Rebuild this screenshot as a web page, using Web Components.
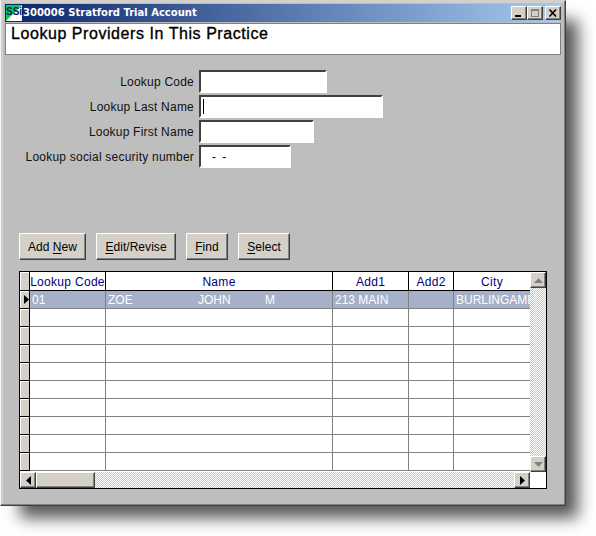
<!DOCTYPE html>
<html>
<head>
<meta charset="utf-8">
<title>Lookup Providers</title>
<style>
  html, body { margin: 0; background: #fff; }
  body { width: 596px; height: 536px; overflow: hidden; font: 12px "Liberation Sans", Arial, sans-serif; }
</style>
</head>
<body>
<app-window>
  <title-bar slot="title">300006 Stratford Trial Account</title-bar>
  <page-heading slot="heading">Lookup Providers In This Practice</page-heading>
  <lookup-field label="Lookup Code" width="128"></lookup-field>
  <lookup-field label="Lookup Last Name" width="184" caret></lookup-field>
  <lookup-field label="Lookup First Name" width="115"></lookup-field>
  <lookup-field label="Lookup social security number" width="92" value="- -"></lookup-field>
  <push-button slot="buttons" width="67" key="N" text="Add New"></push-button>
  <push-button slot="buttons" width="80" key="E" text="Edit/Revise"></push-button>
  <push-button slot="buttons" width="42" key="F" text="Find"></push-button>
  <push-button slot="buttons" width="52" key="S" text="Select"></push-button>
  <data-grid slot="grid"></data-grid>
</app-window>

<script>
class AppWindow extends HTMLElement {
  constructor() {
    super();
    this.attachShadow({ mode: "open" }).innerHTML = `
    <style>
    :host {
      display: block;
      box-sizing: border-box;
      width: 566px;
      height: 506px;
      padding: 3px 4px 0 4px;
      background: #bebebe;
      border-top: 1px solid #d4d0c8;
      border-left: 1px solid #f4f4f0;
      border-right: 1px solid #404040;
      border-bottom: 1px solid #404040;
      box-shadow: inset -1px -1px 0 #808080, inset 2px 2px 0 #d0d0d0, 16px 16px 15px -4px rgba(0,0,0,.66);
      color: #000;
    }
    .form {
      display: flex;
      flex-direction: column;
      gap: 2px;
      padding: 15px 0 0 0;
      height: 100px;
    }
    .buttons {
      display: flex;
      gap: 10px;
      margin: 63px 0 0 14px;
    }
    .grid { margin: 11px 0 0 14px; }
    </style>
    <slot name="title"></slot>
    <slot name="heading"></slot>
    <div class="form"><slot></slot></div>
    <div class="buttons"><slot name="buttons"></slot></div>
    <div class="grid"><slot name="grid"></slot></div>
    `;
  }
}

class TitleBar extends HTMLElement {
  constructor() {
    super();
    this.attachShadow({ mode: "open" }).innerHTML = `
    <style>
    :host {
      display: flex;
      align-items: center;
      height: 18px;
      background: linear-gradient(90deg, #0a246a 0%, #a6caf0 100%);
      color: #fff;
      font: bold 10px "DejaVu Sans", sans-serif;
    }
    svg.logo { width: 16px; height: 16px; margin: 0 1px 0 1px; flex: none; }
    .text { flex: 1; white-space: nowrap; margin-top: -2px; }
    .btns { display: flex; }
    .btn {
      box-sizing: border-box;
      width: 16px;
      height: 14px;
      background: #d4d0c8;
      border: 1px solid;
      border-color: #fff #404040 #404040 #fff;
      box-shadow: inset -1px -1px 0 #808080;
      display: block;
    }
    .btn svg { width: 14px; height: 12px; display: block; }
    .max { margin: 0 2px 0 0; }
    </style>
    <svg class="logo" viewBox="0 0 16 16">
      <rect width="16" height="16" fill="#fff"/>
      <path d="M0 0H16L0 16Z" fill="#10c850"/>
      <text x="0" y="10" font-family="Liberation Sans" font-size="10" fill="#0a246a">SSi</text>
    </svg>
    <span class="text"><slot></slot></span>
    <span class="btns">
      <span class="btn"><svg viewBox="0 0 14 12"><rect x="3" y="8" width="6" height="2" fill="#000"/></svg></span>
      <span class="btn max"><svg viewBox="0 0 14 12"><rect x="3.5" y="2.5" width="7" height="7" fill="none" stroke="#808080"/><rect x="3" y="2" width="8" height="2" fill="#808080"/></svg></span>
      <span class="btn"><svg viewBox="0 0 14 12"><path d="M3.5 2.5L10 9.5M10 2.5L3.5 9.5" stroke="#000" stroke-width="1.7"/></svg></span>
    </span>
    `;
  }
}

class PageHeading extends HTMLElement {
  constructor() {
    super();
    this.attachShadow({ mode: "open" }).innerHTML = `
    <style>
    :host {
      display: block;
      box-sizing: border-box;
      height: 32px;
      margin-top: 1px;
      padding: 0 0 0 5px;
      background: #fff;
      border: 1px solid #808080;
      font: 16px/20px "Liberation Sans", sans-serif;
      letter-spacing: .56px;
      -webkit-text-stroke: .35px #000;
    }
    </style>
    <slot></slot>
    `;
  }
}

class LookupField extends HTMLElement {
  constructor() {
    super();
    const root = this.attachShadow({ mode: "open" });
    root.innerHTML = `
    <style>
    :host { display: flex; align-items: center; height: 23px; }
    .label {
      width: 189px;
      margin-right: 5px;
      text-align: right;
      white-space: nowrap;
      font: 12px "Liberation Sans", sans-serif;
      letter-spacing: .22px;
      color: #111;
    }
    .box {
      box-sizing: border-box;
      height: 23px;
      display: flex;
      align-items: center;
      background: #fff;
      border: 2px solid;
      border-color: #404040 #fff #fff #404040;
      font: 12px "Liberation Sans", sans-serif;
    }
    .caret { width: 1px; height: 15px; background: #000; margin-left: 2px; }
    .value { margin-left: 11px; letter-spacing: 1.5px; }
    </style>
    <span class="label"></span>
    <span class="box"></span>
    `;
    root.querySelector(".label").textContent = this.getAttribute("label");
    const box = root.querySelector(".box");
    box.style.width = this.getAttribute("width") + "px";
    if (this.hasAttribute("caret")) {
      box.innerHTML = `<span class="caret"></span>`;
    }
    if (this.hasAttribute("value")) {
      box.innerHTML = `<span class="value">${this.getAttribute("value")}</span>`;
    }
  }
}

class PushButton extends HTMLElement {
  constructor() {
    super();
    const root = this.attachShadow({ mode: "open" });
    root.innerHTML = `
    <style>
    :host {
      display: flex;
      align-items: center;
      justify-content: center;
      box-sizing: border-box;
      height: 27px;
      background: #d4d0c8;
      border: 1px solid;
      border-color: #fff #404040 #404040 #fff;
      box-shadow: inset -1px -1px 0 #808080;
      font: 12px "Liberation Sans", sans-serif;
      letter-spacing: .05px;
      white-space: nowrap;
    }
    u { text-decoration: underline; text-underline-offset: 2px; }
    </style>
    <span class="t"></span>
    `;
    this.style.width = this.getAttribute("width") + "px";
    const text = this.getAttribute("text");
    const i = text.indexOf(this.getAttribute("key"));
    root.querySelector(".t").innerHTML =
      text.slice(0, i) + "<u>" + text[i] + "</u>" + text.slice(i + 1);
  }
}

const COLUMNS = [
  ["Lookup Code", 76],
  ["Name", 227],
  ["Add1", 76],
  ["Add2", 45],
  ["City", 76],
];
const FIRST = ["01", "", "213 MAIN", "", "BURLINGAME"];

class DataGrid extends HTMLElement {
  constructor() {
    super();
    const track = COLUMNS.map(c => c[1] + "px").join(" ");
    const head = COLUMNS.map(c => `<div class="h">${c[0]}</div>`).join("");
    let rows = "";
    for (let r = 0; r < 10; r++) {
      const cells = COLUMNS.map((c, i) => {
        if (r !== 0) return `<div class="c"></div>`;
        if (i === 1) return `<div class="c name"><span>ZOE</span><span>JOHN</span><span>M</span></div>`;
        return `<div class="c">${FIRST[i]}</div>`;
      }).join("");
      rows += `<div class="ind">${r === 0 ? '<svg width="5" height="9" viewBox="0 0 5 9"><path d="M0 0L5 4.5L0 9Z"/></svg>' : ""}</div>
        <div class="row${r === 0 ? " sel" : ""}">${cells}</div>`;
    }
    this.attachShadow({ mode: "open" }).innerHTML = `
    <style>
    :host {
      display: grid;
      box-sizing: border-box;
      width: 528px;
      height: 218px;
      grid-template-columns: 1fr 16px;
      grid-template-rows: 1fr 16px;
      background: #fff;
      border: 1px solid #000;
      font: 12px "Liberation Sans", sans-serif;
    }
    .table {
      display: grid;
      grid-template-columns: 10px 500px;
      grid-template-rows: 19px;
      grid-auto-rows: 18px;
      overflow: hidden;
      align-content: start;
    }
    .corner, .ind {
      box-sizing: border-box;
      background: #d4d0c8;
      border-right: 1px solid #000;
      border-bottom: 1px solid #000;
      display: flex;
      align-items: center;
      justify-content: flex-end;
      box-shadow: inset 1px 1px 0 #fff;
    }
    .row { display: grid; grid-template-columns: ${track}; }
    .h, .c {
      box-sizing: border-box;
      overflow: hidden;
      white-space: nowrap;
    }
    .h {
      padding-top: 2px;
      line-height: 16px;
      text-align: center;
      color: #000080;
      letter-spacing: .3px;
      border-right: 1px solid #000;
      border-bottom: 1px solid #000;
    }
    .h:last-child { border-right: 0; }
    .c {
      padding: 1px 0 0 2px;
      line-height: 16px;
      border-right: 1px solid #808080;
      border-bottom: 1px solid #808080;
    }
    .c:last-child { border-right: 0; }
    .sel .c { background: #a6b0c8; color: #fff; }
    .name { display: flex; }
    .name span:nth-child(1) { width: 90px; }
    .name span:nth-child(2) { width: 67px; }
    .hatch {
      background-color: #fff;
      background-image: conic-gradient(#c8c8c8 25%, #fff 0 50%, #c8c8c8 0 75%, #fff 0);
      background-size: 2px 2px;
    }
    .vbar { display: flex; flex-direction: column; justify-content: space-between; }
    .hbar { display: flex; justify-content: space-between; grid-row: 2; }
    .sb {
      box-sizing: border-box;
      width: 16px;
      height: 16px;
      flex: none;
      display: flex;
      align-items: center;
      justify-content: center;
      background: #d4d0c8;
      border: 1px solid;
      border-color: #fff #404040 #404040 #fff;
      box-shadow: inset -1px -1px 0 #808080;
    }
    .thumb { width: 59px; height: 16px; }
    .left { display: flex; }
    </style>
    <div class="table">
      <div class="corner"></div>
      <div class="row">${head}</div>
      ${rows}
    </div>
    <div class="vbar hatch">
      <span class="sb"><svg width="9" height="5" viewBox="0 0 9 5"><path d="M4.5 0L9 5H0Z" fill="#808080"/></svg></span>
      <span class="sb"><svg width="9" height="5" viewBox="0 0 9 5"><path d="M0 0H9L4.5 5Z" fill="#808080"/></svg></span>
    </div>
    <div class="hbar hatch">
      <span class="left">
        <span class="sb"><svg width="5" height="9" viewBox="0 0 5 9"><path d="M5 0V9L0 4.5Z"/></svg></span>
        <span class="sb thumb"></span>
      </span>
      <span class="sb"><svg width="5" height="9" viewBox="0 0 5 9"><path d="M0 0L5 4.5L0 9Z"/></svg></span>
    </div>
    `;
  }
}

customElements.define("app-window", AppWindow);
customElements.define("title-bar", TitleBar);
customElements.define("page-heading", PageHeading);
customElements.define("lookup-field", LookupField);
customElements.define("push-button", PushButton);
customElements.define("data-grid", DataGrid);
</script>
</body>
</html>
